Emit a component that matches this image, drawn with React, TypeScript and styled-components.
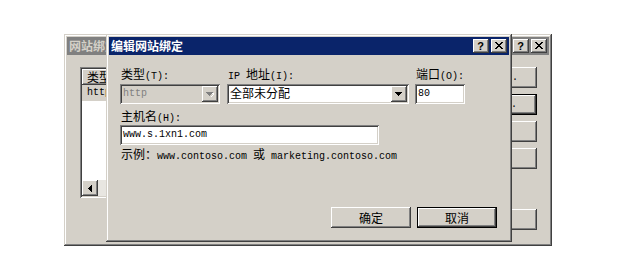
import React from 'react';
import styled, { createGlobalStyle, css } from 'styled-components';

const FACE = '#d4d0c8';

const GlobalStyle = createGlobalStyle`
  html, body { margin: 0; padding: 0; background: #fff; }
  body {
    font-family: "Liberation Mono", "Noto Sans CJK SC", monospace;
    font-size: 10px;
    color: #000;
  }
`;

const raised = css`
  box-shadow: inset -1px -1px #404040, inset 1px 1px #fff, inset -2px -2px #808080, inset 2px 2px ${FACE};
`;

const sunken = css`
  box-shadow: inset 1px 1px #808080, inset -1px -1px #fff, inset 2px 2px #404040, inset -2px -2px ${FACE};
`;

const Cjk = styled.span`
  font-family: "Noto Sans CJK SC", sans-serif;
  font-size: 12px;
`;

const CJK_RE = /([\u3000-\u9fff\uff00-\uffef]+)/;

const Txt: React.FC<{ children: string }> = ({ children }) => (
  <>
    {children.split(CJK_RE).filter(Boolean).map((part, i) =>
      CJK_RE.test(part) ? <Cjk key={i}>{part}</Cjk> : <span key={i}>{part}</span>
    )}
  </>
);

const Desktop = styled.div`
  position: relative;
  width: 618px;
  height: 274px;
  overflow: hidden;
  background: #fff;
`;

const Window = styled.div<{ $left: number; $top: number; $w: number; $h: number }>`
  position: absolute;
  left: ${p => p.$left}px;
  top: ${p => p.$top}px;
  width: ${p => p.$w}px;
  height: ${p => p.$h}px;
  box-sizing: border-box;
  padding: 3px;
  background: ${FACE};
  box-shadow: inset -1px -1px #404040, inset 1px 1px ${FACE}, inset -2px -2px #808080, inset 2px 2px #fff;
  display: flex;
  flex-direction: column;
`;

const TitleBar = styled.div<{ $active?: boolean }>`
  height: 18px;
  flex: none;
  display: flex;
  align-items: center;
  padding-left: 2px;
  background: ${p => (p.$active ? '#0a246a' : '#808080')};
  color: ${p => (p.$active ? '#fff' : FACE)};
`;

const TitleText = styled.span<{ $clip?: number }>`
  font-family: "Noto Sans CJK SC", sans-serif;
  font-size: 12px;
  font-weight: 700;
  line-height: 18px;
  white-space: nowrap;
  overflow: hidden;
  ${p => (p.$clip ? `max-width: ${p.$clip}px;` : '')}
`;

const TitleButtons = styled.div`
  margin-left: auto;
  display: flex;
  gap: 2px;
  padding-right: 2px;
  flex: none;
`;

const TitleBtn = styled.div`
  width: 16px;
  height: 14px;
  box-sizing: border-box;
  background: ${FACE};
  ${raised};
  display: flex;
  align-items: center;
  justify-content: center;
  color: #000;
  font-family: "Liberation Sans", sans-serif;
  font-weight: 700;
  font-size: 11px;
  line-height: 14px;
  padding-bottom: 1px;
  padding-right: 1px;
`;

const CloseGlyph = () => (
  <svg width="8" height="7" viewBox="0 0 8 7" shapeRendering="crispEdges">
    <path d="M0 0h2v1h-2zM6 0h2v1h-2zM1 1h2v1h-2zM5 1h2v1h-2zM2 2h4v1h-4zM3 3h2v1h-2zM2 4h4v1h-4zM1 5h2v1h-2zM5 5h2v1h-2zM0 6h2v1h-2zM6 6h2v1h-2z" fill="#000" />
  </svg>
);

/* ---------- background window ---------- */

const BackBody = styled.div`
  flex: 1;
  display: flex;
  gap: 6px;
  padding: 12px 12px 13px 13px;
  min-height: 0;
`;

const ListView = styled.div`
  flex: 1;
  height: 131px;
  box-sizing: border-box;
  padding: 2px;
  background: #fff;
  ${sunken};
  display: flex;
  flex-direction: column;
`;

const ListHeader = styled.div`
  height: 16px;
  flex: none;
  width: 120px;
  box-sizing: border-box;
  background: ${FACE};
  ${raised};
  padding-left: 5px;
  line-height: 16px;
`;

const ListRow = styled.div`
  height: 16px;
  flex: none;
  background: ${FACE};
  padding-left: 5px;
  line-height: 16px;
`;

const ListFill = styled.div`
  flex: 1;
`;

const HScroll = styled.div`
  height: 16px;
  flex: none;
  display: flex;
  background: #e8e6e1;
`;

const ScrollBtn = styled.div`
  width: 16px;
  height: 16px;
  box-sizing: border-box;
  background: ${FACE};
  ${raised};
  display: flex;
  align-items: center;
  justify-content: center;
`;

const ButtonColumn = styled.div`
  width: 100px;
  flex: none;
  display: flex;
  flex-direction: column;
  gap: 6px;
`;

const PushButton = styled.button<{ $default?: boolean; $w?: number; $end?: boolean }>`
  width: ${p => (p.$w ? `${p.$w}px` : '100%')};
  height: 21px;
  flex: none;
  box-sizing: border-box;
  margin: 0;
  padding: 0 ${p => (p.$end ? '19px' : '0')} 0 0;
  background: ${FACE};
  border: ${p => (p.$default ? '1px solid #000' : 'none')};
  ${p =>
    p.$default
      ? css`box-shadow: inset -1px -1px #404040, inset 1px 1px #fff, inset -2px -2px #808080;`
      : raised};
  font-family: "Liberation Mono", "Noto Sans CJK SC", monospace;
  font-size: 10px;
  line-height: 19px;
  color: #000;
  display: flex;
  align-items: center;
  justify-content: ${p => (p.$end ? 'flex-end' : 'center')};
  white-space: nowrap;
`;

const BottomButton = styled(PushButton)`
  margin-top: auto;
`;

/* ---------- front dialog ---------- */

const FrontBody = styled.div`
  flex: 1;
  display: flex;
  flex-direction: column;
  padding: 12px 11px 11px 11px;
`;

const FieldGrid = styled.div`
  display: grid;
  grid-template-columns: 107px 188px 50px;
`;

const FieldCol = styled.div`
  display: flex;
  flex-direction: column;
  gap: 3px;
`;

const Label = styled.div`
  height: 14px;
  line-height: 14px;
  padding-left: 1px;
  white-space: nowrap;
`;

const Field = styled.div<{ $disabled?: boolean; $w?: number }>`
  width: ${p => (p.$w ? `${p.$w}px` : '100%')};
  height: 20px;
  box-sizing: border-box;
  padding: 2px;
  background: ${p => (p.$disabled ? FACE : '#fff')};
  color: ${p => (p.$disabled ? '#808080' : '#000')};
  ${sunken};
  display: flex;
  align-items: center;
`;

const FieldText = styled.div`
  flex: 1;
  padding-left: 1px;
  line-height: 16px;
  white-space: nowrap;
  overflow: hidden;
`;

const DropBtn = styled.div`
  width: 16px;
  height: 16px;
  flex: none;
  box-sizing: border-box;
  background: ${FACE};
  ${raised};
  display: flex;
  align-items: center;
  justify-content: center;
`;

const Arrow: React.FC<{ disabled?: boolean }> = ({ disabled }) => (
  <svg width="8" height="5" viewBox="0 0 8 5" shapeRendering="crispEdges">
    {disabled && <path d="M2 1h7v1h-1v1h-1v1h-1v1h-1v-1h1v-1h1v-1h1z" fill="#fff" />}
    <path d="M0 0h7v1h-1v1h-1v1h-1v1h-1v-1h-1v-1h-1v-1h-1z" fill={disabled ? '#808080' : '#000'} />
  </svg>
);

const LeftArrow = () => (
  <svg width="4" height="7" viewBox="0 0 4 7" shapeRendering="crispEdges">
    <path d="M3 0h1v7h-1v-1h-1v-1h-1v-1h-1v-1h1v-1h1v-1h1z" fill="#000" />
  </svg>
);

const HostBlock = styled.div`
  display: flex;
  flex-direction: column;
  gap: 2px;
  margin-top: 5px;
`;

const Hint = styled.div`
  height: 14px;
  line-height: 14px;
  padding-left: 1px;
  margin-top: 2px;
  white-space: pre;
`;

const ButtonRow = styled.div`
  margin-top: auto;
  display: flex;
  justify-content: flex-end;
  gap: 6px;
  padding-right: 1px;
`;

const DialogButton = styled(PushButton)`
  font-family: "Noto Sans CJK SC", sans-serif;
  font-size: 12px;
`;

export default function App() {
  return (
    <>
      <GlobalStyle />
      <Desktop>
        <Window $left={64} $top={34} $w={488} $h={212}>
          <TitleBar>
            <TitleText $clip={37}>网站绑定</TitleText>
            <TitleButtons>
              <TitleBtn>?</TitleBtn>
              <TitleBtn><CloseGlyph /></TitleBtn>
            </TitleButtons>
          </TitleBar>
          <BackBody>
            <ListView>
              <ListHeader><Txt>类型</Txt></ListHeader>
              <ListRow>http</ListRow>
              <ListFill />
              <HScroll>
                <ScrollBtn><LeftArrow /></ScrollBtn>
              </HScroll>
            </ListView>
            <ButtonColumn>
              <PushButton $end>.</PushButton>
              <PushButton $end $default>.</PushButton>
              <PushButton />
              <PushButton />
              <BottomButton />
            </ButtonColumn>
          </BackBody>
        </Window>

        <Window $left={106} $top={34} $w={406} $h={208}>
          <TitleBar $active>
            <TitleText>编辑网站绑定</TitleText>
            <TitleButtons>
              <TitleBtn>?</TitleBtn>
              <TitleBtn><CloseGlyph /></TitleBtn>
            </TitleButtons>
          </TitleBar>
          <FrontBody>
            <FieldGrid>
              <FieldCol>
                <Label><Txt>类型(T):</Txt></Label>
                <Field $disabled $w={100}>
                  <FieldText>http</FieldText>
                  <DropBtn><Arrow disabled /></DropBtn>
                </Field>
              </FieldCol>
              <FieldCol>
                <Label><Txt>IP 地址(I):</Txt></Label>
                <Field $w={182}>
                  <FieldText><Txt>全部未分配</Txt></FieldText>
                  <DropBtn><Arrow /></DropBtn>
                </Field>
              </FieldCol>
              <FieldCol>
                <Label><Txt>端口(O):</Txt></Label>
                <Field>
                  <FieldText>80</FieldText>
                </Field>
              </FieldCol>
            </FieldGrid>
            <HostBlock>
              <Label><Txt>主机名(H):</Txt></Label>
              <Field $w={259}>
                <FieldText>www.s.1xn1.com</FieldText>
              </Field>
            </HostBlock>
            <Hint><Txt>示例：www.contoso.com 或 marketing.contoso.com</Txt></Hint>
            <ButtonRow>
              <DialogButton $w={80}>确定</DialogButton>
              <DialogButton $w={80} $default>取消</DialogButton>
            </ButtonRow>
          </FrontBody>
        </Window>
      </Desktop>
    </>
  );
}
